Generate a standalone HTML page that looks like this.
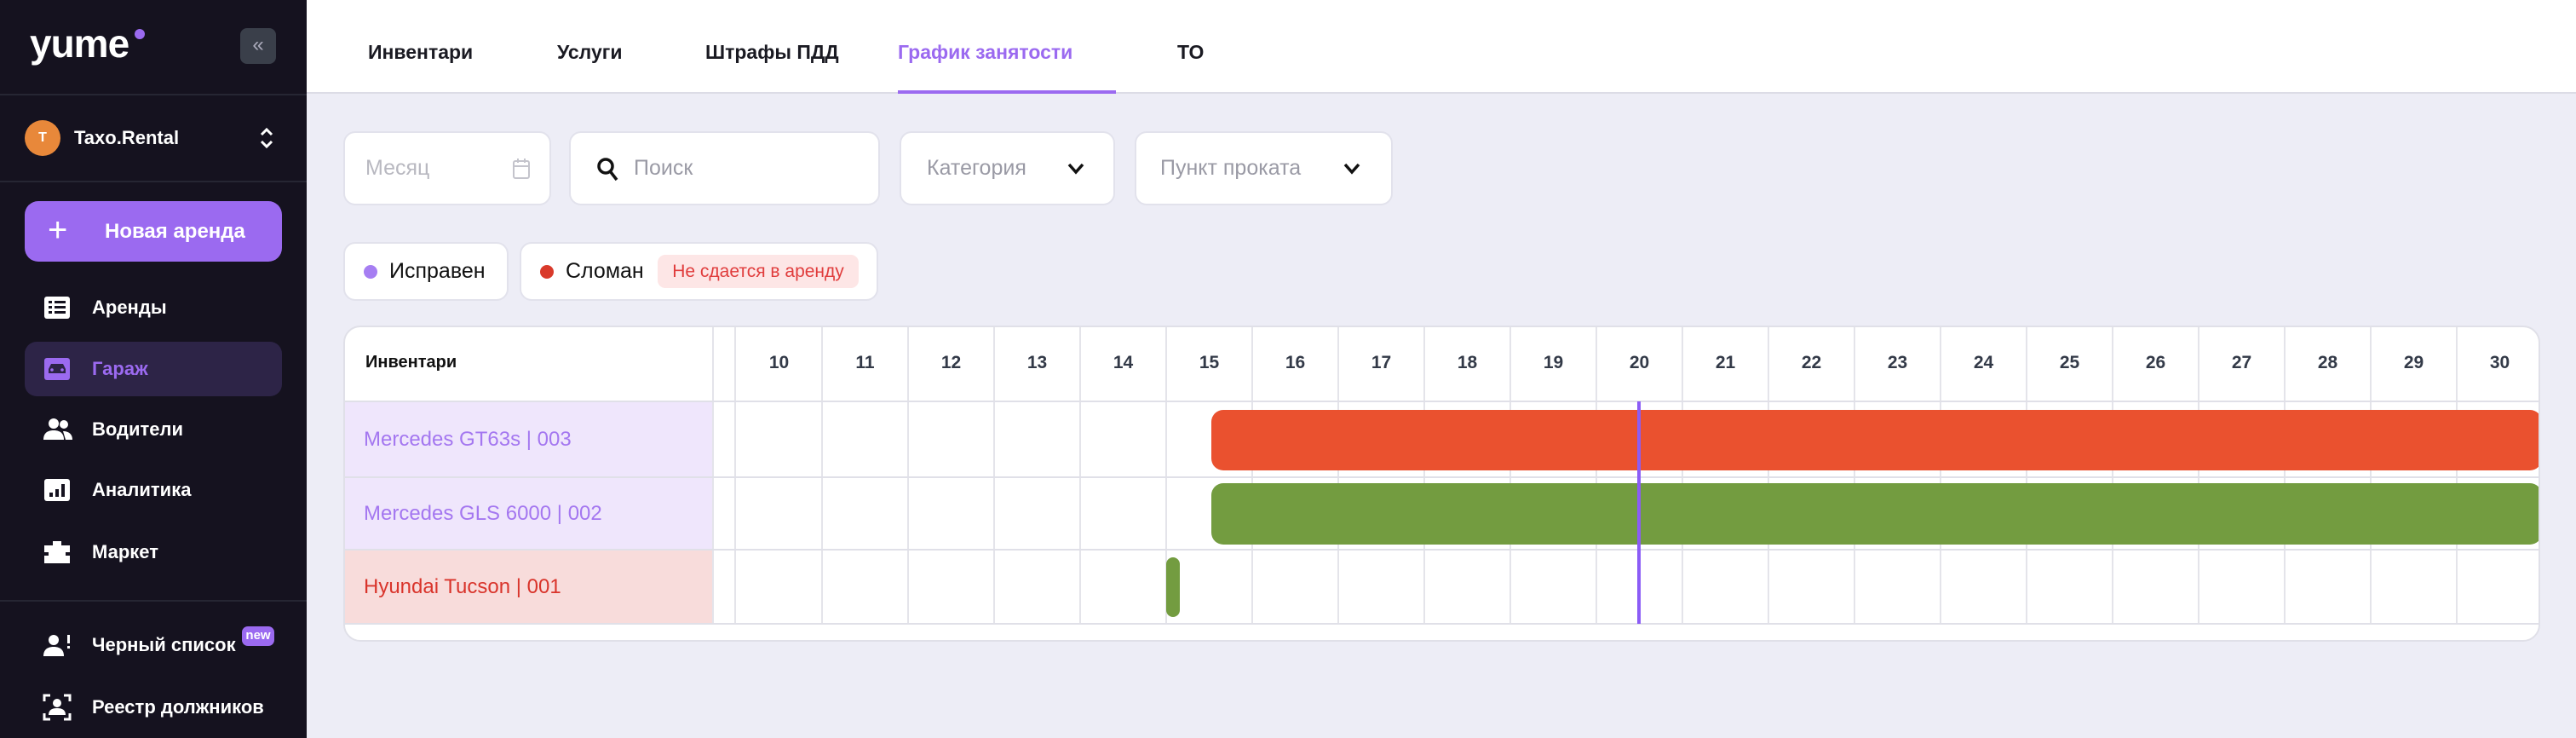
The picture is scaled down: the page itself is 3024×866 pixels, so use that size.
<!DOCTYPE html>
<html><head><meta charset="utf-8"><style>
*{box-sizing:border-box;margin:0;padding:0}
body{width:3024px;height:866px;overflow:hidden;background:#ededf6;font-family:"Liberation Sans",sans-serif;position:relative}
.abs{position:absolute}
#side{left:0;top:0;width:360px;height:866px;background:#15121f;color:#fff}
.hr{position:absolute;left:0;width:360px;height:2px;background:#262633}
.mi{position:absolute;left:0;width:360px;height:64px;display:flex;align-items:center;font-size:22px;font-weight:bold;color:#fff}
.mi svg{position:absolute;left:50px}
.mi span{position:absolute;left:108px}
#top{left:360px;top:0;width:2664px;height:110px;background:#fff;border-bottom:2px solid #dcdce6}
.tab{position:absolute;top:48px;font-size:23px;font-weight:bold;color:#1a1a22}
.box{position:absolute;background:#fff;border:2px solid #e2e2ec;border-radius:14px;display:flex;align-items:center;font-size:25px;color:#9a9aa5}
#card{left:403px;top:382px;width:2579px;height:371px;background:#fff;border:2px solid #e0e0e8;border-radius:20px;overflow:hidden}
.vl{position:absolute;top:0;width:2px;height:348px;background:#e4e4ea}
.hl{position:absolute;left:0;width:2579px;height:2px;background:#e0e0e8}
.day{position:absolute;top:30px;width:101px;text-align:center;font-size:21px;font-weight:bold;color:#333a48}
.lab{position:absolute;left:0;width:433px;font-size:24px;padding-left:22px;display:flex;align-items:center}
</style></head><body>
<div id="side" class="abs">
 <div class="abs" style="left:35px;top:24px;font-size:46px;font-weight:bold;letter-spacing:-1px;color:#fff">yume</div>
 <div class="abs" style="left:158px;top:34px;width:12px;height:12px;border-radius:50%;background:#9b6af0"></div>
 <div class="abs" style="left:282px;top:33px;width:42px;height:42px;border-radius:8px;background:#3a3f4a;color:#aab;font-size:24px;text-align:center;line-height:40px">«</div>
 <div class="hr" style="top:110px"></div>
 <div class="abs" style="left:29px;top:141px;width:42px;height:42px;border-radius:50%;background:#e8883a;font-size:16px;font-weight:bold;text-align:center;line-height:42px">T</div>
 <div class="abs" style="left:87px;top:149px;font-size:22px;font-weight:bold">Taxo.Rental</div>
 <svg class="abs" style="left:303px;top:148px" width="20" height="28" viewBox="0 0 20 28"><path d="M4 10l6-6 6 6M4 18l6 6 6-6" stroke="#fff" stroke-width="3" fill="none"/></svg>
 <div class="hr" style="top:212px"></div>
 <div class="abs" style="left:29px;top:236px;width:302px;height:71px;border-radius:16px;background:#9b6af0"></div>
 <div class="abs" style="left:56px;top:248px;font-size:40px;color:#fff;font-weight:300">+</div>
 <div class="abs" style="left:123px;top:258px;font-size:24px;font-weight:bold">Новая аренда</div>
 <div class="mi" style="top:329px"><svg width="34" height="30" viewBox="0 0 34 30"><rect x="2" y="2" width="30" height="26" rx="3" fill="#fff"/><g fill="#15121f"><rect x="7" y="7" width="4" height="3"/><rect x="14" y="7" width="13" height="3"/><rect x="7" y="13" width="4" height="3"/><rect x="14" y="13" width="13" height="3"/><rect x="7" y="19" width="4" height="3"/><rect x="14" y="19" width="13" height="3"/></g></svg><span>Аренды</span></div>
 <div class="abs" style="left:29px;top:401px;width:302px;height:64px;border-radius:14px;background:#2d2447"></div>
 <div class="mi" style="top:401px;color:#9b6af0"><svg width="34" height="30" viewBox="0 0 34 30"><rect x="2" y="2" width="30" height="26" rx="3" fill="#9b6af0"/><path d="M7 20v-5l3-6h14l3 6v5z" fill="#2d2447"/><circle cx="11" cy="16" r="1.8" fill="#9b6af0"/><circle cx="23" cy="16" r="1.8" fill="#9b6af0"/></svg><span>Гараж</span></div>
 <div class="mi" style="top:472px"><svg width="36" height="30" viewBox="0 0 36 30"><circle cx="13" cy="8" r="6" fill="#fff"/><path d="M1 27c0-8 5-11 12-11s12 3 12 11z" fill="#fff"/><circle cx="25" cy="9" r="5" fill="#fff"/><path d="M24 17c6 0 11 3 11 10h-8z" fill="#fff"/></svg><span>Водители</span></div>
 <div class="mi" style="top:543px"><svg width="34" height="30" viewBox="0 0 34 30"><rect x="2" y="2" width="30" height="26" rx="3" fill="#fff"/><g fill="#15121f"><rect x="8" y="18" width="4" height="5"/><rect x="15" y="14" width="4" height="9"/><rect x="22" y="8" width="4" height="15"/></g></svg><span>Аналитика</span></div>
 <div class="mi" style="top:616px"><svg width="34" height="30" viewBox="0 0 34 30"><path d="M12 2h10v5h10v8h-5v4h5v9H2v-9h5v-4H2V7h10z" fill="#fff"/></svg><span>Маркет</span></div>
 <div class="hr" style="top:704px"></div>
 <div class="mi" style="top:725px"><svg width="36" height="30" viewBox="0 0 36 30"><circle cx="13" cy="9" r="6" fill="#fff"/><path d="M1 28c0-8 5-11 12-11s12 3 12 11z" fill="#fff"/><rect x="29" y="3" width="3" height="10" fill="#fff"/><rect x="29" y="16" width="3" height="3" fill="#fff"/></svg><span>Черный список</span></div>
 <div class="abs" style="left:284px;top:735px;width:38px;height:23px;border-radius:7px;background:#9b6af0;font-size:15px;font-weight:bold;text-align:center;line-height:21px">new</div>
 <div class="mi" style="top:798px"><svg width="34" height="32" viewBox="0 0 34 32"><path d="M2 9V2h7M25 2h7v7M32 23v7h-7M9 30H2v-7" stroke="#fff" stroke-width="3" fill="none"/><circle cx="17" cy="11" r="5" fill="#fff"/><path d="M7 25c0-6 4-8 10-8s10 2 10 8z" fill="#fff"/></svg><span>Реестр должников</span></div>
</div>

<div id="top" class="abs">
 <div class="tab" style="left:72px">Инвентари</div>
 <div class="tab" style="left:294px">Услуги</div>
 <div class="tab" style="left:468px">Штрафы ПДД</div>
 <div class="tab" style="left:694px;color:#9b6af0">График занятости</div>
 <div class="tab" style="left:1022px">ТО</div>
 <div class="abs" style="left:694px;top:106px;width:256px;height:4px;background:#9b6af0"></div>
</div>

<div class="box" style="left:403px;top:154px;width:244px;height:87px;padding-left:24px;color:#b8b8c0">Месяц
 <svg class="abs" style="left:196px;top:29px" width="22" height="26" viewBox="0 0 22 26"><rect x="2" y="4" width="18" height="20" rx="2" stroke="#c4c4cc" stroke-width="2" fill="none"/><path d="M2 10h18M7 1v5M15 1v5" stroke="#c4c4cc" stroke-width="2"/></svg></div>
<div class="box" style="left:668px;top:154px;width:365px;height:87px;padding-left:74px">Поиск
 <svg class="abs" style="left:30px;top:28px" width="28" height="30" viewBox="0 0 28 30"><circle cx="11" cy="11" r="8" stroke="#111" stroke-width="3.5" fill="none"/><path d="M17 18l7 9" stroke="#111" stroke-width="3.5"/></svg></div>
<div class="box" style="left:1056px;top:154px;width:253px;height:87px;padding-left:30px">Категория
 <svg class="abs" style="left:194px;top:34px" width="22" height="16" viewBox="0 0 22 16"><path d="M3 3l8 9 8-9" stroke="#111" stroke-width="3.5" fill="none"/></svg></div>
<div class="box" style="left:1332px;top:154px;width:303px;height:87px;padding-left:28px">Пункт проката
 <svg class="abs" style="left:242px;top:34px" width="22" height="16" viewBox="0 0 22 16"><path d="M3 3l8 9 8-9" stroke="#111" stroke-width="3.5" fill="none"/></svg></div>

<div class="box" style="left:403px;top:284px;width:194px;height:69px;color:#111;font-size:25px;padding-left:22px"><span style="width:16px;height:16px;border-radius:50%;background:#a67ef2;margin-right:14px"></span>Исправен</div>
<div class="box" style="left:610px;top:284px;width:421px;height:69px;color:#111;font-size:25px;padding-left:22px"><span style="width:16px;height:16px;border-radius:50%;background:#d93a2b;margin-right:14px"></span>Сломан
 <span class="abs" style="left:160px;top:13px;width:236px;height:39px;border-radius:9px;background:#fde6e6;color:#e03c3c;font-size:21px;text-align:center;line-height:39px">Не сдается в аренду</span></div>

<div id="card" class="abs">
 <div class="abs" style="left:24px;top:30px;font-size:20px;font-weight:bold;color:#111">Инвентари</div>
 <div class="lab" style="top:87px;height:89px;background:#efe6fc;color:#a477f0">Mercedes GT63s | 003</div>
 <div class="lab" style="top:176px;height:85px;background:#efe6fc;color:#a477f0">Mercedes GLS 6000 | 002</div>
 <div class="lab" style="top:261px;height:87px;background:#f8dcdb;color:#d9342b">Hyundai Tucson | 001</div>
 <div class="vl" style="left:431px"></div>
 <div class="vl" style="left:457px"></div>
 <div id="grid"></div>
 <div class="hl" style="top:86px"></div>
 <div class="hl" style="top:175px"></div>
 <div class="hl" style="top:260px"></div>
 <div class="hl" style="top:347px"></div>
 <div class="abs" style="left:1017px;top:97px;width:1562px;height:71px;background:#ea512f;border-radius:14px"></div>
 <div class="abs" style="left:1017px;top:183px;width:1562px;height:72px;background:#739c40;border-radius:14px"></div>
 <div class="abs" style="left:964px;top:270px;width:16px;height:70px;background:#739c40;border-radius:8px"></div>
 <div class="abs" style="left:1517px;top:87px;width:4px;height:261px;background:#8b5cf6"></div>
</div>
<script>
var g='';for(var i=0;i<21;i++){var x=459+i*101;g+='<div class="day" style="left:'+x+'px">'+(10+i)+'</div>';if(i>0)g+='<div class="vl" style="left:'+(x-1)+'px"></div>';}
document.getElementById('grid').outerHTML=g;
</script>
</body></html>
